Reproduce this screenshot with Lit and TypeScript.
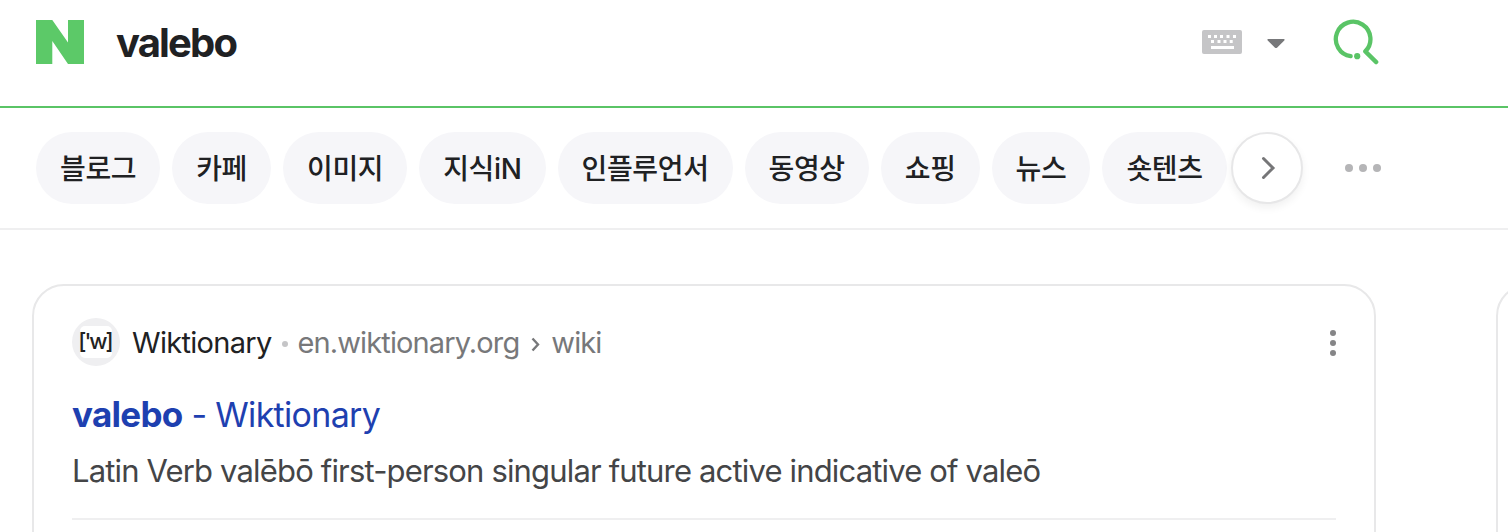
import { LitElement, html, css } from "lit";
import { customElement, property } from "lit/decorators.js";

const TABS = ["블로그", "카페", "이미지", "지식iN", "인플루언서", "동영상", "쇼핑", "뉴스", "숏텐츠"];

@customElement("search-header")
class SearchHeader extends LitElement {
  @property() query = "";
  static styles = css`
    :host { display: block; }
    .bar { box-sizing: border-box; height: 108px; padding: 20px 128px 0 36px; border-bottom: 2px solid #5ac466; display: flex; align-items: flex-start; }
    svg { display: block; flex: none; }
    .query { margin-left: 32px; flex: 1; font-size: 40px; line-height: 46px; font-weight: 700; letter-spacing: -1.85px; color: #202123; white-space: nowrap; }
    .keyboard { margin-top: 10px; }
    .caret { margin: 18px 0 0 24px; }
    .search { margin: -2px 0 0 46px; }
  `;
  render() {
    return html`<header class="bar">
      <svg width="48" height="44" viewBox="0 0 48 44"><path fill="#5cc968" d="M0 0H16.3L32 22.5V0H48V44H32L16.3 21V44H0Z"/></svg>
      <div class="query">${this.query}</div>
      <svg class="keyboard" width="40" height="24" viewBox="0 0 40 24">
        <rect width="40" height="24" rx="2" fill="#c5c5c7"/>
        <path fill="#fff" d="M6 5h3v3h-3zM12 5h3v3h-3zM18 5h3v3h-3zM24.5 5h3v3h-3zM31 5h3v3h-3zM9 10h3v3h-3zM15.5 10h3v3h-3zM21.5 10h3v3h-3zM27.700 10h3v3h-3zM9 16h23v3h-23z"/>
      </svg>
      <svg class="caret" width="20" height="12" viewBox="0 0 20 12"><path fill="#77787a" d="M2.200 1h15.600q1.400 .3 .5 1.400l-7.300 7.300q-1 .8-2 0l-7.300-7.300q-.9-1.100 .5-1.400z"/></svg>
      <svg class="search" width="48" height="48" viewBox="0 0 48 48">
        <path d="M18.600 38.200A17.300 17.300 0 1 1 33.300 33.400L44.200 44.100" fill="none" stroke="#5ac466" stroke-width="4.300" stroke-linecap="round" stroke-linejoin="round"/>
        <circle cx="25.200" cy="38.200" r="3.100" fill="#5ac466"/>
      </svg>
    </header>`;
  }
}

@customElement("search-tabs")
class SearchTabs extends LitElement {
  static styles = css`
    :host { display: block; }
    .tabs { box-sizing: border-box; height: 122px; padding: 24px 36px 0; border-bottom: 2px solid #efeff0; display: flex; }
    .list { display: flex; gap: 12px; }
    .tab { height: 72px; box-sizing: border-box; padding: 1px 24px 0; border-radius: 36px; background: #f6f6f9; color: #202123; font-family: Inter, "Noto Sans CJK KR", sans-serif; font-size: 28px; line-height: 72px; font-weight: 500; letter-spacing: -0.36px; white-space: nowrap; }
    .next { box-sizing: border-box; width: 72px; height: 72px; margin-left: 4px; border: 2px solid #e7e7e8; border-radius: 50%; background: #fff; box-shadow: 0 4px 8px rgba(0,0,0,.06); display: grid; place-items: center; }
    .more { display: flex; gap: 6px; align-items: center; height: 72px; margin-left: 42px; }
    .dot { width: 8px; height: 8px; border-radius: 50%; background: #b5b5b7; }
    svg { display: block; }
  `;
  render() {
    return html`<nav class="tabs">
      <div class="list">${TABS.map((t) => html`<span class="tab">${t}</span>`)}</div>
      <span class="next"><svg width="24" height="24" viewBox="0 0 24 24"><path d="M8.500 2.500L18 12L8.500 21.500" fill="none" stroke="#767678" stroke-width="3" stroke-linecap="round" stroke-linejoin="miter"/></svg></span>
      <span class="more"><i class="dot"></i><i class="dot"></i><i class="dot"></i></span>
    </nav>`;
  }
}

@customElement("result-card")
class ResultCard extends LitElement {
  static styles = css`
    :host { display: block; }
    .card { box-sizing: border-box; width: 1344px; height: 300px; padding: 32px 38px 0; border: 2px solid #e8e8e9; border-radius: 32px; background: #fff; }
    .source { height: 48px; display: flex; align-items: center; font-size: 29px; line-height: 48px; white-space: nowrap; }
    .favicon { width: 48px; height: 48px; border-radius: 50%; background: #efeff1; display: grid; place-items: center; }
    .mark { width: 32px; height: 32px; border-radius: 5px; background: #fff; display: flex; justify-content: center; font-size: 22px; line-height: 31px; font-weight: 500; letter-spacing: -2px; text-indent: -2px; color: #222; }
    .site { margin-left: 12px; padding-top: 2px; color: #202123; letter-spacing: -0.7px; }
    .sep { width: 6px; height: 6px; margin: 4px 10px 0 10px; border-radius: 50%; background: #c5c5c7; }
    .url { padding-top: 2px; color: #77787a; letter-spacing: -0.88px; }
    .chev { margin: 5px 11px 0 12px; }
    .menu { margin-left: auto; display: grid; gap: 4px; padding-top: 2px; }
    .menu i { width: 6px; height: 6px; border-radius: 50%; background: #858587; }
    .title { margin-top: 24px; height: 48px; font-size: 34px; line-height: 48px; letter-spacing: -0.7px; color: #1e40b0; white-space: nowrap; }
    .title b { font-size: 35px; font-weight: 700; letter-spacing: -0.7px; }
    .desc { margin: 10px 0 0; height: 46px; font-size: 31px; line-height: 46px; letter-spacing: -0.84px; color: #444547; white-space: nowrap; }
    .rule { margin-top: 24px; height: 2px; background: #efeff0; }
  `;
  render() {
    return html`<article class="card">
      <div class="source">
        <span class="favicon"><span class="mark">['w]</span></span>
        <span class="site">Wiktionary</span><i class="sep"></i>
        <span class="url">en.wiktionary.org</span>
        <svg class="chev" width="9" height="15" viewBox="0 0 9 15"><path d="M1.500 1.500L7 7.500L1.500 13.500" fill="none" stroke="#77787a" stroke-width="2.400"/></svg>
        <span class="url">wiki</span>
        <span class="menu"><i></i><i></i><i></i></span>
      </div>
      <div class="title"><b>valebo</b><span class="tail"> - Wiktionary</span></div>
      <p class="desc">Latin Verb valēbō first-person singular future active indicative of valeō</p>
      <div class="rule"></div>
    </article>`;
  }
}

@customElement("app-root")
class AppRoot extends LitElement {
  static styles = css`
    :host { display: block; height: 532px; overflow: hidden; background: #fff; font-family: Inter, "Noto Sans CJK KR", sans-serif; }
    .content { display: flex; gap: 120px; padding: 54px 0 0 32px; }
    .side { box-sizing: border-box; flex: none; width: 600px; height: 300px; border: 2px solid #e8e8e9; border-radius: 32px; }
    result-card { flex: none; }
  `;
  render() {
    return html`<search-header .query=${"valebo"}></search-header>
      <search-tabs></search-tabs>
      <main class="content"><result-card></result-card><aside class="side"></aside></main>`;
  }
}
